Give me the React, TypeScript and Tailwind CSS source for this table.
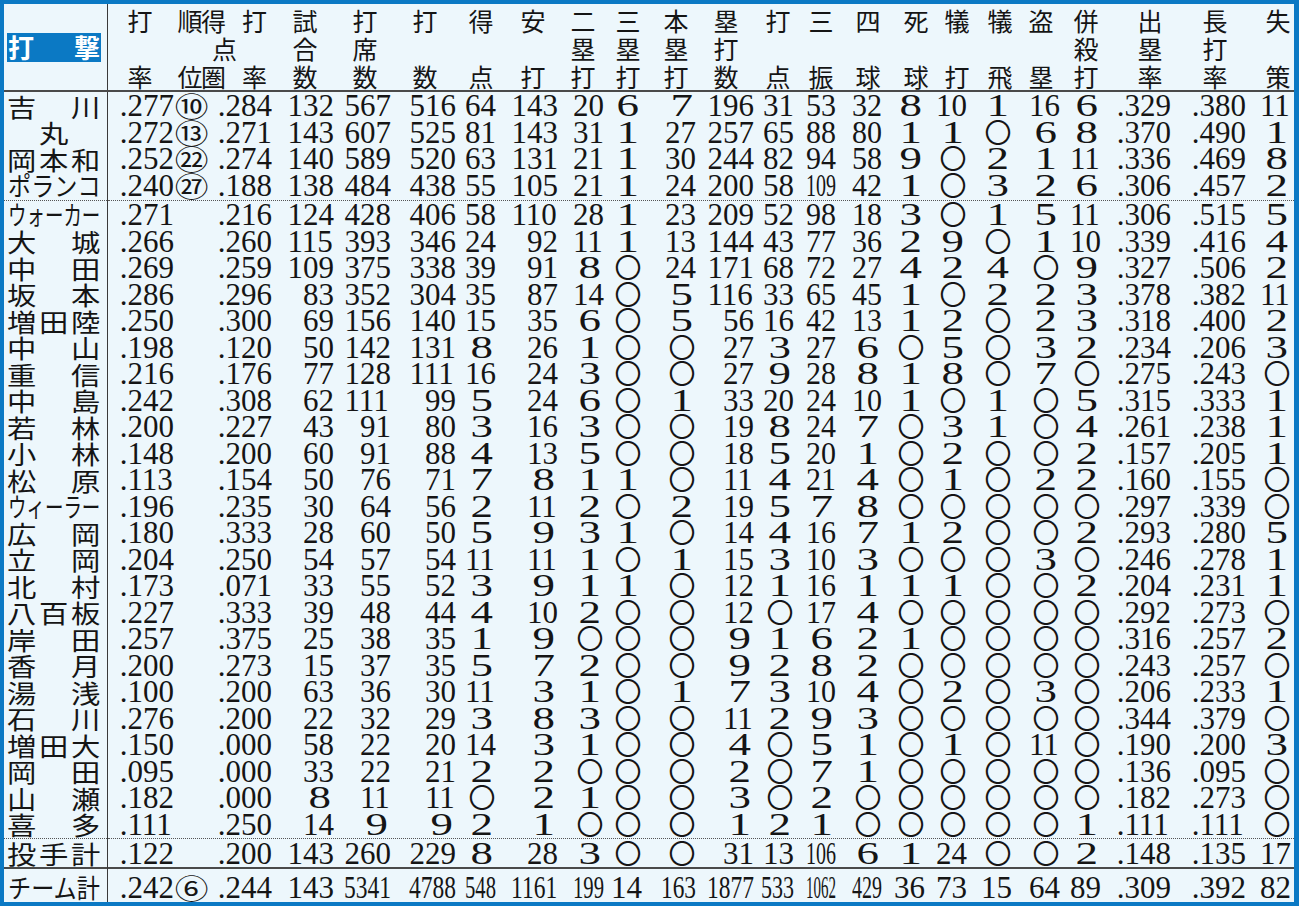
import React from "react";

// 24 columns: name + 23 stat columns, widths taken from the printed table
const GRID =
  "grid grid-cols-[104px_66px_34px_64px_62px_57px_65px_40px_62px_46px_38px_54px_58px_40px_42px_46px_43px_42px_45px_48px_41px_70px_75px_45px_1fr]";

const FONT = 31;
const JP = "font-['Noto_Sans_CJK_JP','Noto_Sans_CJK_SC',sans-serif]";

type Col = { h: [string, string, string]; hc: string; slot: number };

const COLUMNS: Col[] = [
  { h: ["打", "", "率"], hc: "pr-[21px]", slot: 0 },
  { h: ["順", "", "位"], hc: "pr-[5px]", slot: 0 },
  { h: ["得打", "点", "圏率"], hc: "pr-[5px]", slot: 0 },
  { h: ["試", "合", "数"], hc: "pr-[16px]", slot: 47 },
  { h: ["打", "席", "数"], hc: "pr-[13px]", slot: 47 },
  { h: ["打", "", "数"], hc: "pr-[18px]", slot: 47 },
  { h: ["得", "", "点"], hc: "pr-[2px]", slot: 31 },
  { h: ["安", "", "打"], hc: "pr-[12px]", slot: 47 },
  { h: ["二", "塁", "打"], hc: "pr-[8px]", slot: 31 },
  { h: ["三", "塁", "打"], hc: "pr-[1px]", slot: 31 },
  { h: ["本", "塁", "打"], hc: "pr-[7px]", slot: 35 },
  { h: ["塁", "打", "数"], hc: "pr-[15px]", slot: 47 },
  { h: ["打", "", "点"], hc: "pr-[3px]", slot: 33 },
  { h: ["三", "", "振"], hc: "pr-[2px]", slot: 30 },
  { h: ["四", "", "球"], hc: "pr-[1px]", slot: 30 },
  { h: ["死", "", "球"], hc: "-mr-[4px]", slot: 31 },
  { h: ["犠", "", "打"], hc: "-mr-[3px]", slot: 31 },
  { h: ["犠", "", "飛"], hc: "-mr-[1px]", slot: 31 },
  { h: ["盗", "", "塁"], hc: "pr-[6px]", slot: 31 },
  { h: ["併", "殺", "打"], hc: "pr-[2px]", slot: 31 },
  { h: ["出", "塁", "率"], hc: "pr-[8px]", slot: 0 },
  { h: ["長", "打", "率"], hc: "pr-[18px]", slot: 0 },
  { h: ["失", "", "策"], hc: "pr-[0px]", slot: 31 },
];

const TOP = [
  "吉川 .277 ⑩ .284 132 567 516 64 143 20 6 7 196 31 53 32 8 10 1 16 6 .329 .380 11",
  "丸 .272 ⑬ .271 143 607 525 81 143 31 1 27 257 65 88 80 1 1 0 6 8 .370 .490 1",
  "岡本和 .252 ㉒ .274 140 589 520 63 131 21 1 30 244 82 94 58 9 0 2 1 11 .336 .469 8",
  "ポランコ .240 ㉗ .188 138 484 438 55 105 21 1 24 200 58 109 42 1 0 3 2 6 .306 .457 2",
];

const REST = [
  "ウォーカー .271 - .216 124 428 406 58 110 28 1 23 209 52 98 18 3 0 1 5 11 .306 .515 5",
  "大城 .266 - .260 115 393 346 24 92 11 1 13 144 43 77 36 2 9 0 1 10 .339 .416 4",
  "中田 .269 - .259 109 375 338 39 91 8 0 24 171 68 72 27 4 2 4 0 9 .327 .506 2",
  "坂本 .286 - .296 83 352 304 35 87 14 0 5 116 33 65 45 1 0 2 2 3 .378 .382 11",
  "増田陸 .250 - .300 69 156 140 15 35 6 0 5 56 16 42 13 1 2 0 2 3 .318 .400 2",
  "中山 .198 - .120 50 142 131 8 26 1 0 0 27 3 27 6 0 5 0 3 2 .234 .206 3",
  "重信 .216 - .176 77 128 111 16 24 3 0 0 27 9 28 8 1 8 0 7 0 .275 .243 0",
  "中島 .242 - .308 62 111 99 5 24 6 0 1 33 20 24 10 1 0 1 0 5 .315 .333 1",
  "若林 .200 - .227 43 91 80 3 16 3 0 0 19 8 24 7 0 3 1 0 4 .261 .238 1",
  "小林 .148 - .200 60 91 88 4 13 5 0 0 18 5 20 1 0 2 0 0 2 .157 .205 1",
  "松原 .113 - .154 50 76 71 7 8 1 1 0 11 4 21 4 0 1 0 2 2 .160 .155 0",
  "ウィーラー .196 - .235 30 64 56 2 11 2 0 2 19 5 7 8 0 0 0 0 0 .297 .339 0",
  "広岡 .180 - .333 28 60 50 5 9 3 1 0 14 4 16 7 1 2 0 0 2 .293 .280 5",
  "立岡 .204 - .250 54 57 54 11 11 1 0 1 15 3 10 3 0 0 0 3 0 .246 .278 1",
  "北村 .173 - .071 33 55 52 3 9 1 1 0 12 1 16 1 1 1 0 0 2 .204 .231 1",
  "八百板 .227 - .333 39 48 44 4 10 2 0 0 12 0 17 4 0 0 0 0 0 .292 .273 0",
  "岸田 .257 - .375 25 38 35 1 9 0 0 0 9 1 6 2 1 0 0 0 0 .316 .257 2",
  "香月 .200 - .273 15 37 35 5 7 2 0 0 9 2 8 2 0 0 0 0 0 .243 .257 0",
  "湯浅 .100 - .200 63 36 30 11 3 1 0 1 7 3 10 4 0 2 0 3 0 .206 .233 1",
  "石川 .276 - .200 22 32 29 3 8 3 0 0 11 2 9 3 0 0 0 0 0 .344 .379 0",
  "増田大 .150 - .000 58 22 20 14 3 1 0 0 4 0 5 1 0 1 0 11 0 .190 .200 3",
  "岡田 .095 - .000 33 22 21 2 2 0 0 0 2 0 7 1 0 0 0 0 0 .136 .095 0",
  "山瀬 .182 - .000 8 11 11 0 2 1 0 0 3 0 2 0 0 0 0 0 0 .182 .273 0",
  "喜多 .111 - .250 14 9 9 2 1 0 0 0 1 2 1 0 0 0 0 0 1 .111 .111 0",
];

const PITCHERS = "投手計 .122 - .200 143 260 229 8 28 3 0 0 31 13 106 6 1 24 0 0 2 .148 .135 17";
const TEAM = "チーム計 .242 ⑥ .244 143 5341 4788 548 1161 199 14 163 1877 533 1062 429 36 73 15 64 89 .309 .392 82";

function Num({ v, slot }: { v: string; slot: number }) {
  if (!v) return null;
  if (/^[\u2460-\u2473\u3251-\u325f]$/.test(v)) {
    return <span className={`inline-block scale-x-[1.25] ${JP} text-[27px] leading-none`}>{v}</span>;
  }
  if (v.length === 1) {
    if (v === "0") {
      return <span className={`flex w-[28px] justify-center ${JP} text-[27px]`}>〇</span>;
    }
    return (
      <span className="flex w-[28px] justify-center translate-y-[1px]">
        <span className="inline-block scale-x-[1.45]">{v}</span>
      </span>
    );
  }
  const digits = v.replace(".", "").length;
  const natural = digits * FONT * 0.5 + (v.includes(".") ? FONT * 0.25 : 0);
  const k = slot && natural > slot ? slot / natural : 1;
  return (
    <span className="inline-block whitespace-nowrap translate-y-[1px]" style={{ width: natural * k }}>
      <span className="inline-block origin-left" style={{ transform: `scaleX(${k})` }}>
        {v}
      </span>
    </span>
  );
}

function NameCell({ name, pad }: { name: string; pad: string }) {
  const chars = [...name];
  let inner: React.ReactNode;
  if (chars.length === 1) {
    inner = (
      <div className="flex w-full justify-center">
        <span className="inline-block scale-x-[1.15]">{name}</span>
      </div>
    );
  } else if (chars.length <= 3) {
    inner = (
      <div className="flex w-full justify-between">
        {chars.map((c, i) => (
          <span key={i} className="inline-block scale-x-[1.15]">
            {c}
          </span>
        ))}
      </div>
    );
  } else if (chars.length === 4) {
    inner = <span className="-ml-[1px] inline-block origin-left scale-x-[0.89] whitespace-nowrap text-[26px]">{name}</span>;
  } else {
    inner = <span className="-ml-[1px] inline-block origin-left scale-x-[0.71] whitespace-nowrap text-[26px]">{name}</span>;
  }
  return (
    <div className={`flex items-center border-r border-[#3a3a3a] pl-[5px] pr-[8px] ${JP} text-[25.5px] leading-none ${pad}`}>
      {inner}
    </div>
  );
}

function Row({ line, h, pad = "" }: { line: string; h: string; pad?: string }) {
  const [name, ...vals] = line.split(" ");
  return (
    <div className={`${GRID} ${h}`}>
      <NameCell name={name} pad={pad} />
      {vals.map((v, i) => (
        <div key={i} className={`flex items-center ${i === 1 ? "justify-center" : "justify-end"} ${pad}`}>
          <Num v={v === "-" ? "" : v} slot={COLUMNS[i].slot} />
        </div>
      ))}
      <div />
    </div>
  );
}

function Sep({ h, line }: { h: string; line: string }) {
  return (
    <div className={`flex ${h}`}>
      <div className="w-[104px] border-r border-[#3a3a3a]">
        <div className={`h-full ${line}`} />
      </div>
      <div className={`flex-1 ${line}`} />
    </div>
  );
}

function Header() {
  return (
    <div className={`${GRID} h-[88px] border-b-2 border-[#4a4a4a] ${JP}`}>
      <div className="flex items-center border-r border-[#3a3a3a] pl-[3px] pr-[6px]">
        <div className="flex h-[29px] w-full items-center justify-between bg-[#0b79c4] px-[1px] text-[26px] font-bold leading-none text-white">
          <span>打</span>
          <span>撃</span>
        </div>
      </div>
      {COLUMNS.map((c, i) =>
        i === 2 ? (
          <div key={i} className={`flex flex-col items-end pt-[2px] text-[25px] leading-[28px] ${c.hc}`}>
            <div className="flex w-[66px] justify-between">
              <span>得</span>
              <span>打</span>
            </div>
            <div className="w-[66px] pl-[11px]">点</div>
            <div className="flex w-[66px] justify-between">
              <span>圏</span>
              <span>率</span>
            </div>
          </div>
        ) : (
          <div key={i} className={`flex flex-col items-end pt-[2px] text-[25px] leading-[28px] ${c.hc}`}>
            {c.h.map((t, j) => (
              <div key={j} className="w-[26px] text-center">
                {t || "\u00a0"}
              </div>
            ))}
          </div>
        )
      )}
      <div />
    </div>
  );
}

const App = () => {
  return (
    <div className="flex h-[906px] w-[1299px] flex-col overflow-hidden border-b-4 border-l-4 border-r-[5px] border-t-4 border-[#0b79c4] bg-[#edf7fc] font-['Liberation_Serif',serif] text-[31px] leading-[26.5px] text-[#151515]">
      <Header />
      {TOP.map((l) => (
        <Row key={l} line={l} h="h-[26.5px]" />
      ))}
      <Sep h="h-[3px]" line="border-b border-dotted border-[#555]" />
      {REST.map((l) => (
        <Row key={l} line={l} h="h-[26.5px]" />
      ))}
      <Sep h="h-[2px]" line="border-b border-dotted border-[#555]" />
      <Row line={PITCHERS} h="h-[28px]" />
      <Sep h="h-[2px]" line="border-b-2 border-[#4a4a4a]" />
      <Row line={TEAM} h="flex-1" pad="pt-[3px]" />
    </div>
  );
};

export default App;
